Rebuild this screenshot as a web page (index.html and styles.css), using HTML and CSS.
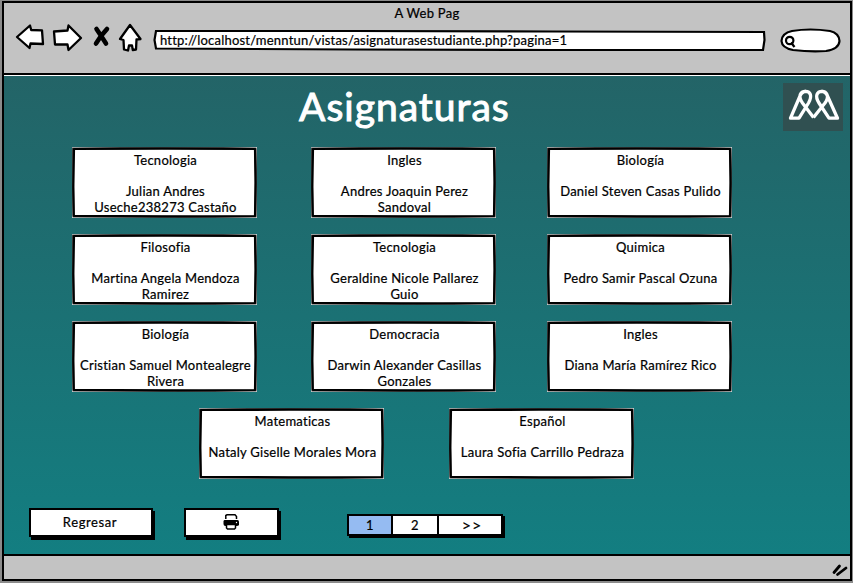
FILE: index.html
```
<!DOCTYPE html>
<html lang="es">
<head>
<meta charset="utf-8">
<title>Asignaturas</title>
<link rel="stylesheet" href="styles.css">
</head>
<body>
<svg class="defs" aria-hidden="true">
  <symbol id="box" viewBox="0 0 185 71">
    <path d="M0 0H185V71H0Z" fill="#fff"/>
    <path d="M1 1.500L50 1.200L100 .8L150 1.200L183.500 1.500L184 30L183.500 69.500L130 70L60 69.600L1.500 69.500L1 36Z" fill="#fff" stroke="#444" stroke-width="2.200"/>
    <path d="M2 2L90 1.700L183 2L183.500 36L183 69L90 69.400L1.800 68.800L1.300 40Z" fill="none" stroke="#000" stroke-width="2.200" stroke-linejoin="round"/>
  </symbol>
</svg>
<div class="window">
  <header class="toolbar">
    <div class="title">A Web Pag</div>
    <div class="controls">
      <svg class="nav" viewBox="0 0 130 32" fill="#fff" stroke="#000" stroke-width="2.300" stroke-linejoin="round">
        <path d="M2 16L15 4.500L16.200 9L27 9.300L28 23L15.500 22.500L14.500 27Z"/>
        <path d="M39 10.500L52.500 9.500L53.500 4.500L66 17L53.500 29L52.500 23.500L40 23.500Z"/>
        <path d="M81.500 8L85.500 14L91 22.500M92 8L86 15L81 22.500" stroke-width="4.600" stroke-linecap="round" fill="none"/>
        <path d="M115 4L125.500 18L121.500 18.500L121 28.500L117.800 29L117 24.500L114 24.500L113 29.500L109 28.500L108.500 19L105 18Z"/>
      </svg>
      <div class="address">
        <svg viewBox="0 0 613 24" fill="#fff" stroke="#000" stroke-width="2.200"><path d="M3 3L200 3L400 3.500L611 4L611.500 12L610 22L400 22L200 21.500L3 20.500L1.500 12Z"/></svg>
        <span>http://localhost/menntun/vistas/asignaturasestudiante.php?pagina=1</span>
      </div>
      <svg class="search" viewBox="0 0 62 26" fill="#fff" stroke="#000" stroke-width="2.200">
        <path d="M12 3Q30 0 50 3Q59 5 59.500 13Q59 21 46 23Q30 24 13 22Q2 20 1.500 13Q2 5 12 3Z"/>
        <circle cx="9.700" cy="12.500" r="3.700"/><path d="M11 14.500L14.500 19"/>
      </svg>
    </div>
  </header>
  <main class="page">
    <div class="heading">
      <h1>Asignaturas</h1>
      <svg class="logo" viewBox="0 0 60 48"><path fill="#305051" d="M0 0H60V48H0Z"/>
        <g fill="none" stroke="#fff" stroke-width="3.300" stroke-linejoin="round">
          <path d="M30.500 34.500L42 20C47 13 43.500 8.300 39 8.300C34 8.300 31.500 13 36 20L46 35.200H54.500L44.500 13Q42.500 8.300 38.500 8.300"/>
          <path d="M30.500 34.500L19.500 20C14.500 13 17.500 8.300 22.500 8.300C27.500 8.300 29.500 13 25.500 20L16 35.200H7.500L17 13Q19 8.300 23 8.300"/>
        </g>
      </svg>
    </div>
    <div class="cards">
      <article class="card"><svg><use href="#box"/></svg><h2>Tecnologia</h2><p>Julian Andres<br>Useche238273 Castaño</p></article>
      <article class="card"><svg><use href="#box"/></svg><h2>Ingles</h2><p>Andres Joaquin Perez<br>Sandoval</p></article>
      <article class="card"><svg><use href="#box"/></svg><h2>Biología</h2><p>Daniel Steven Casas Pulido</p></article>
      <article class="card"><svg><use href="#box"/></svg><h2>Filosofia</h2><p>Martina Angela Mendoza<br>Ramirez</p></article>
      <article class="card"><svg><use href="#box"/></svg><h2>Tecnologia</h2><p>Geraldine Nicole Pallarez<br>Guio</p></article>
      <article class="card"><svg><use href="#box"/></svg><h2>Quimica</h2><p>Pedro Samir Pascal Ozuna</p></article>
      <article class="card"><svg><use href="#box"/></svg><h2>Biología</h2><p>Cristian Samuel Montealegre<br>Rivera</p></article>
      <article class="card"><svg><use href="#box"/></svg><h2>Democracia</h2><p>Darwin Alexander Casillas<br>Gonzales</p></article>
      <article class="card"><svg><use href="#box"/></svg><h2>Ingles</h2><p>Diana María Ramírez Rico</p></article>
    </div>
    <div class="cards-last">
      <article class="card"><svg><use href="#box"/></svg><h2>Matematicas</h2><p>Nataly Giselle Morales Mora</p></article>
      <article class="card"><svg><use href="#box"/></svg><h2>Español</h2><p>Laura Sofia Carrillo Pedraza</p></article>
    </div>
    <div class="actions">
      <button class="btn back">Regresar</button>
      <button class="btn print" aria-label="Imprimir">
        <svg viewBox="0 0 16 16"><path d="M2.800 5V1.500L4 .8H12L13.500 2.500V5" fill="none" stroke="#000" stroke-width="1.500"/><path d="M1.500 6H14.500Q16 6 16 8V11Q15.500 12 13.500 12H2.500Q.5 12 .5 10V7.500Q.5 6 1.500 6Z"/><path d="M3.500 10.500H12.500V14L11.500 15H4.500L3.500 14Z" fill="#fff" stroke="#000" stroke-width="1.500"/><circle cx="13.500" cy="8.500" r=".7" fill="#fff"/></svg>
      </button>
      <nav class="pager"><a class="current">1</a><a>2</a><a class="next">&gt;&gt;</a></nav>
    </div>
  </main>
  <footer class="status">
    <svg viewBox="0 0 18 14" stroke="#000" stroke-width="2.800" stroke-linecap="round"><path d="M2 9.500L7.500 3M5.500 11.500L14 5"/></svg>
  </footer>
</div>
</body>
</html>
```
FILE: styles.css
```
* { box-sizing: border-box; }
body {
  margin: 0;
  width: 853px;
  height: 583px;
  padding: 1px 1px 2px 2px;
  overflow: hidden;
  background: #8b8b8b;
  font: 400 13px/15.6px Lato, "Liberation Sans", sans-serif;
  letter-spacing: .26px;
  color: #000;
  -webkit-text-stroke: .22px currentColor;
}
.defs { position: absolute; width: 0; height: 0; }
svg { display: block; }
.window {
  height: 580px;
  display: flex;
  flex-direction: column;
  border: 2px solid #000;
  background: #c3c3c3;
}
.toolbar { height: 72px; border-bottom: 2px solid #000; box-shadow: 0 1px #777; }
.title { padding-top: 3px; height: 20px; text-align: center; }
.controls { display: flex; padding-left: 11px; }
.nav { width: 130px; height: 32px; margin-top: -2px; }
.address { width: 613px; height: 24px; margin: 5px 0 0 8px; display: grid; }
.address svg { width: 613px; height: 24px; grid-area: 1 / 1; }
.address span { grid-area: 1 / 1; padding: 5px 0 0 7px; white-space: nowrap; letter-spacing: .2px; }
.search { width: 62px; height: 26px; margin: 5px 0 0 14px; }
.page {
  height: 479px;
  border-top: 1px solid #fff;
  background: linear-gradient(#236467, #137e81);
}
.heading { height: 71px; display: grid; grid-template-columns: 295px 1fr 60px; padding-right: 7px; }
h1 {
  grid-column: 2;
  margin: 7px 0 0;
  color: #fff;
  font: 400 39px/46px Lato, sans-serif;
  letter-spacing: 1px;
  -webkit-text-stroke: 1px #fff;
}
.logo { width: 60px; height: 48px; margin-top: 7px; }
.cards { display: grid; grid-template-columns: 239px 236px 185px; grid-auto-rows: 71px; row-gap: 16px; padding-left: 68px; }
.cards-last { display: flex; gap: 65px; padding: 16px 0 0 195px; }
.card { width: 185px; height: 71px; display: grid; grid-template-rows: 15.6px 1fr; padding-top: 6px; text-align: center; row-gap: 15.6px; }
.card svg { grid-area: 1 / 1 / 3 / 2; width: 185px; height: 71px; margin-top: -6px; }
.card h2 { grid-area: 1 / 1; margin: 0; padding-left: 2px; font: inherit; }
.card p { grid-area: 2 / 1; margin: 0; padding-left: 2px; white-space: nowrap; }
.actions { display: flex; padding: 29px 0 0 25px; }
.btn {
  font: inherit;
  letter-spacing: .6px;
  color: #000;
  height: 29px;
  padding: 0;
  border: 2px solid #000;
  background: #fff;
  box-shadow: 2px 3px #000;
  display: flex;
  align-items: center;
  justify-content: center;
}
.back { width: 124px; padding-right: 2px; }
.print { width: 95px; margin-left: 31px; }
.print svg { width: 16px; height: 16px; margin: -2px 2px 0 0; }
.pager { display: flex; height: 22px; margin: 6px 0 0 68px; border: 2px solid #000; border-right: 0; box-shadow: 2px 2px #000; background: #fff; }
.pager a { width: 46px; border-right: 2px solid #000; text-align: center; line-height: 18px; }
.pager .current { width: 44px; background: #95bbf2; }
.pager .next { width: 64px; padding-left: 4px; font-size: 16px; letter-spacing: 1px; }
.status { flex: 1; border-top: 2px solid #000; display: flex; justify-content: flex-end; padding-top: 7px; }
.status svg { width: 18px; height: 14px; }
```
